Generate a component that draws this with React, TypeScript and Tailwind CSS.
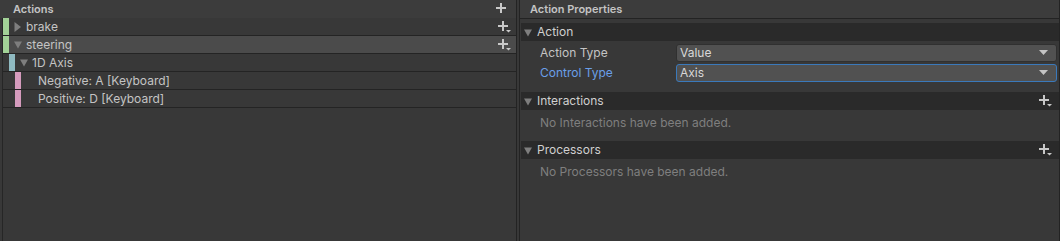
import React from "react";

const font = { fontFamily: "Inter, 'Noto Sans', sans-serif" };

function PlusIcon({ menu = false }: { menu?: boolean }) {
  return (
    <svg width="13" height="12" viewBox="0 0 13 12" className="shrink-0">
      <rect x="4" y="0" width="2" height="10" fill="#c8c8c8" />
      <rect x="0" y="4" width="10" height="2" fill="#c8c8c8" />
      {menu && <path d="M8 9h5l-2.5 2.5z" fill="#c8c8c8" />}
    </svg>
  );
}

function Arrow({ open }: { open: boolean }) {
  return open ? (
    <svg width="8" height="9" viewBox="0 0 8 9" className="shrink-0">
      <path d="M0 1.5h8L4 8.5z" fill="#7e7e7e" />
    </svg>
  ) : (
    <svg width="8" height="10" viewBox="0 0 8 10" className="shrink-0">
      <path d="M0.5 0v10l6.5-5z" fill="#7e7e7e" />
    </svg>
  );
}

type Row = {
  label: string;
  depth: number;
  bar: string;
  arrow?: "open" | "closed";
  plus?: boolean;
  selected?: boolean;
};

const rows: Row[] = [
  { label: "brake", depth: 0, bar: "bg-[#a2d297]", arrow: "closed", plus: true },
  { label: "steering", depth: 0, bar: "bg-[#a2d297]", arrow: "open", plus: true, selected: true },
  { label: "1D Axis", depth: 1, bar: "bg-[#8fbac1]", arrow: "open" },
  { label: "Negative: A [Keyboard]", depth: 2, bar: "bg-[#d59bbd]" },
  { label: "Positive: D [Keyboard]", depth: 2, bar: "bg-[#d59bbd]" },
];

const indent = ["pl-0", "pl-[6px]", "pl-[12px]"];

function TreeRow({ row }: { row: Row }) {
  return (
    <div
      className={`flex h-[18px] items-stretch border-b border-[#242424] ${indent[row.depth]} ${
        row.selected ? "bg-[#4b4b4b]" : ""
      }`}
    >
      <div className={`w-[6px] ${row.bar}`} />
      {row.arrow ? (
        <div className="flex items-center gap-[4px] pl-[5px]">
          <Arrow open={row.arrow === "open"} />
          <span className="text-[12px] text-[#c4c4c4]">{row.label}</span>
        </div>
      ) : (
        <span className="flex items-center pl-[17px] text-[12px] text-[#c4c4c4]">{row.label}</span>
      )}
      <div className="flex-1" />
      {row.plus && (
        <div className="flex items-center pr-[5px]">
          <PlusIcon menu />
        </div>
      )}
    </div>
  );
}

function Foldout({ title, plus = true }: { title: string; plus?: boolean }) {
  return (
    <div className="flex h-[18px] items-center bg-[#2a2a2a] pl-[3px] pr-[7px]">
      <Arrow open />
      <span className="pl-[5px] text-[12px] text-[#d0d0d0]">{title}</span>
      <div className="flex-1" />
      {plus && <PlusIcon menu />}
    </div>
  );
}

function Dropdown({ value, focused }: { value: string; focused?: boolean }) {
  return (
    <div
      className={`flex h-[18px] flex-1 items-center rounded-[3px] border bg-[#515151] pl-[3px] pr-[8px] ${
        focused ? "border-[#3a79bb]" : "border-[#303030]"
      }`}
    >
      <span className="text-[12px] text-[#d8d8d8]">{value}</span>
      <div className="flex-1" />
      <svg width="9" height="6" viewBox="0 0 9 6">
        <path d="M0 0h9L4.5 5z" fill="#c4c4c4" />
      </svg>
    </div>
  );
}

export default function App() {
  return (
    <div className="flex h-[241px] w-[1060px] bg-[#383838] leading-none" style={font}>
      {/* actions tree */}
      <div className="flex w-[517px] flex-col border-r border-[#232323]">
        <div className="flex h-[18px] items-center bg-[#3c3c3c] pl-[13px] pr-[7px]">
          <span className="text-[11px] font-semibold text-[#c4c4c4]">Actions</span>
          <div className="flex-1" />
          <PlusIcon />
        </div>
        <div className="ml-[2px] flex-1 border-l border-[#262626]">
          {rows.map((r) => (
            <TreeRow key={r.label} row={r} />
          ))}
        </div>
      </div>

      <div className="w-[2px]" />

      {/* properties */}
      <div className="flex flex-1 flex-col border-l border-r border-[#232323]">
        <div className="flex h-[19px] items-center border-b border-[#232323] bg-[#3c3c3c] pl-[10px]">
          <span className="text-[11px] font-semibold text-[#c4c4c4]">Action Properties</span>
        </div>
        <div className="flex flex-col pl-[1px] pt-[4px]">
          <Foldout title="Action" plus={false} />
          <div className="flex flex-col gap-[2px] pt-[3px] pr-[2px]">
            <div className="flex items-center">
              <span className="w-[155px] pl-[19px] text-[12px] text-[#c4c4c4]">Action Type</span>
              <Dropdown value="Value" />
            </div>
            <div className="flex items-center">
              <span className="w-[155px] pl-[19px] text-[12px] text-[#6a9fe8]">Control Type</span>
              <Dropdown value="Axis" focused />
            </div>
          </div>
          <div className="pt-[10px]">
            <Foldout title="Interactions" />
          </div>
          <div className="h-[31px] pl-[19px] pt-[7px] text-[12px] text-[#7f7f7f]">
            No Interactions have been added.
          </div>
          <Foldout title="Processors" />
          <div className="pl-[19px] pt-[7px] text-[12px] text-[#7f7f7f]">
            No Processors have been added.
          </div>
        </div>
      </div>
    </div>
  );
}
